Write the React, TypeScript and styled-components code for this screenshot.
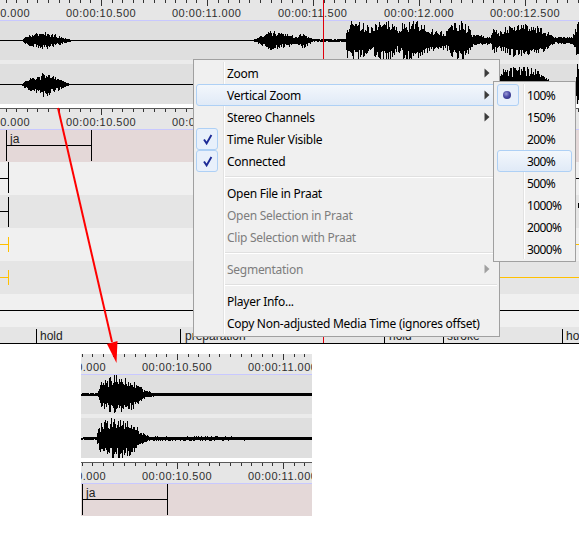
import React from "react";
import styled, { createGlobalStyle } from "styled-components";

const Global = createGlobalStyle`
  html, body { margin: 0; padding: 0; background: #fff; }
  #root { width: 579px; height: 550px; overflow: hidden; }
`;

const Page = styled.div`
  position: relative;
  width: 579px;
  height: 550px;
  background: #fff;
  overflow: hidden;
`;

const Panel = styled.div`
  position: relative;
  width: 579px;
  height: 344px;
  overflow: hidden;
  display: flex;
  flex-direction: column;
`;

const InsetPanel = styled.div`
  width: 231px;
  margin: 10px 0 0 81px;
  overflow: hidden;
  display: flex;
  flex-direction: column;
`;

const RulerBar = styled.div<{ $lined?: boolean }>`
  position: relative;
  flex: none;
  height: 20px;
  background: #e6e6e6;
  border-top: ${(p) => (p.$lined ? "1px solid #5a5a5a" : "0")};
  border-bottom: 1px solid #c8c8ff;
  overflow: hidden;
`;

const RulerTicks = styled.svg`
  display: block;
`;

const RulerLabel = styled.span<{ $x: number }>`
  position: absolute;
  top: 7px;
  left: ${(p) => p.$x}px;
  font: 11px/12px "Liberation Sans", Arial, sans-serif;
  letter-spacing: 0.5px;
  color: #2e2e2e;
  white-space: nowrap;
`;

const WaveLane = styled.div<{ $h: number }>`
  flex: none;
  height: ${(p) => p.$h}px;
  background: #dfdfdf;
  overflow: hidden;
`;

const WaveSvg = styled.svg`
  display: block;
`;

const LaneGap = styled.div<{ $white?: boolean }>`
  flex: none;
  height: 4px;
  background: ${(p) => (p.$white ? "#fff" : "#ebebeb")};
`;

const PinkTier = styled.div`
  position: relative;
  flex: none;
  height: 32px;
  background: #e4d8d8;
`;

const Segment = styled.div<{ $x: number; $w: number }>`
  position: absolute;
  top: 0;
  bottom: 1px;
  left: ${(p) => p.$x}px;
  width: ${(p) => p.$w}px;
  box-sizing: border-box;
  border-left: 1px solid #000;
  border-right: 1px solid #000;
  &::after {
    content: "";
    position: absolute;
    top: 15px;
    left: 0;
    right: 0;
    height: 1px;
    background: #000;
  }
`;

const SegmentLabel = styled.span`
  position: absolute;
  top: 2px;
  left: 3px;
  font: 12px/14px "Liberation Sans", Arial, sans-serif;
  color: #222;
`;

const TierRow = styled.div<{ $shade?: boolean; $h?: number }>`
  position: relative;
  flex: none;
  height: ${(p) => p.$h ?? 33}px;
  background: ${(p) => (p.$shade ? "#e5e5e5" : "#f0f0f0")};
`;

const VMark = styled.div<{ $x: number; $top: number; $h: number; $c?: string }>`
  position: absolute;
  left: ${(p) => p.$x}px;
  top: ${(p) => p.$top}px;
  width: 1px;
  height: ${(p) => p.$h}px;
  background: ${(p) => p.$c ?? "#000"};
`;

const HMark = styled.div<{ $x: number; $w: number; $top: number; $c?: string }>`
  position: absolute;
  left: ${(p) => p.$x}px;
  top: ${(p) => p.$top}px;
  width: ${(p) => p.$w}px;
  height: 1px;
  background: ${(p) => p.$c ?? "#000"};
`;

const TierText = styled.span<{ $x: number }>`
  position: absolute;
  left: ${(p) => p.$x}px;
  top: 2px;
  font: 12px/14px "Liberation Sans", Arial, sans-serif;
  color: #222;
  white-space: nowrap;
`;

const PanelEnd = styled.div`
  flex: none;
  height: 1px;
  background: #000;
`;

const Crosshair = styled.div`
  position: absolute;
  left: 323px;
  top: 0;
  width: 1px;
  height: 343px;
  background: #e0000c;
`;

const ArrowLayer = styled.svg`
  position: absolute;
  left: 0;
  top: 0;
  pointer-events: none;
`;

const Menu = styled.div`
  position: absolute;
  left: 193px;
  top: 59px;
  width: 307px;
  box-sizing: border-box;
  padding: 2px;
  background: #f0f0f0;
  border: 1px solid #a0a0a0;
  font: 12px/22px "Noto Sans", sans-serif;
  color: #000;
`;

const SubMenu = styled(Menu)`
  left: 299px;
  top: 21px;
  width: 83px;
  padding: 2px 3px 1px;
`;

const IconRail = styled.div`
  position: absolute;
  left: 29px;
  top: 2px;
  bottom: 2px;
  width: 1px;
  background: #e2e2e2;
  border-right: 1px solid #fff;
`;

const Item = styled.div<{ $active?: boolean; $disabled?: boolean }>`
  position: relative;
  display: flex;
  align-items: center;
  box-sizing: border-box;
  height: 22px;
  color: ${(p) => (p.$disabled ? "#7d7d7d" : "#000")};
  border: 1px solid ${(p) => (p.$active ? "#aed0f5" : "transparent")};
  border-radius: 3px;
  background: ${(p) => (p.$active ? "linear-gradient(#f3f7fc, #e0eaf7)" : "transparent")};
`;

const IconSlot = styled.div<{ $on?: boolean }>`
  flex: none;
  box-sizing: border-box;
  display: flex;
  align-items: center;
  justify-content: center;
  width: 22px;
  height: 22px;
  margin: -1px 0 -1px -1px;
  border-radius: 3px;
  border: 1px solid ${(p) => (p.$on ? "#aed0f5" : "transparent")};
  background: ${(p) => (p.$on ? "#e8f0fb" : "transparent")};
`;

const ItemText = styled.span`
  margin-left: 9px;
  padding-top: 1px;
  white-space: nowrap;
  letter-spacing: -0.27px;
`;

const PercentText = styled(ItemText)`
  margin-left: 8px;
  letter-spacing: -0.6px;
`;

const SubArrow = styled.svg`
  position: absolute;
  right: 6px;
  top: 5px;
`;

const MenuSeparator = styled.div`
  height: 1px;
  margin: 4px 0 4px 29px;
  background: #e0e0e0;
  border-bottom: 1px solid #fff;
  box-sizing: content-box;
`;

const RadioBall = styled.div`
  width: 8px;
  height: 8px;
  margin: -1px 0 0 -2px;
  border-radius: 50%;
  background: radial-gradient(circle at 40% 35%, #9a9ad8 0%, #4a4aa6 45%, #222270 100%);
`;

type Env = [number, number][];

function makeWave(width: number, center: number, env: Env, seed: number) {
  let s = seed;
  const rnd = () => {
    s = (s * 16807) % 2147483647;
    return s / 2147483647;
  };
  let d = "";
  let seg = 0;
  for (let x = 0; x < width; x++) {
    while (seg < env.length - 2 && x > env[seg + 1][0]) seg++;
    const [x0, a0] = env[seg];
    const [x1, a1] = env[seg + 1];
    const amp = a0 + ((a1 - a0) * Math.min(1, Math.max(0, (x - x0) / (x1 - x0 || 1))));
    const top = Math.round(amp * (0.42 + 0.58 * rnd()));
    const bottom = Math.round(amp * (0.42 + 0.58 * rnd()));
    d += `M${x + 0.5} ${center - top}V${center + bottom + 1}`;
  }
  return d;
}

const Wave = ({ width, height, center, env, seed }: { width: number; height: number; center: number; env: Env; seed: number }) => (
  <WaveLane $h={height}>
    <WaveSvg width={width} height={height} shapeRendering="crispEdges">
      <path d={makeWave(width, center, env, seed)} stroke="#000" strokeWidth={1} fill="none" />
    </WaveSvg>
  </WaveLane>
);

const Ruler = ({ width, phase, lined, labels }: { width: number; phase: number; lined?: boolean; labels: string[] }) => {
  let d = "";
  for (let i = -10; i * 10.6 + phase < width; i++) {
    const x = Math.round(i * 10.6 + phase) + 0.5;
    d += `M${x} 0V${i % 10 === 0 ? 6 : 3}`;
  }
  return (
    <RulerBar $lined={lined}>
      <RulerTicks width={width} height={8} shapeRendering="crispEdges">
        <path d={d} stroke="#333" strokeWidth={1} fill="none" />
      </RulerTicks>
      {labels.map((t, i) => (
        <RulerLabel key={t} $x={phase + (i - 1) * 106 - 35}>
          {t}
        </RulerLabel>
      ))}
    </RulerBar>
  );
};

const topEnvA: Env = [[0,0],[22,0],[24,3],[30,6],[45,9],[55,6],[62,3],[68,1.5],[72,0],[252,0],[258,3],[270,10],[280,8],[290,6],[295,3],[303,8],[310,3],[313,1],[345,1],[347,19],[355,20],[365,18],[370,12],[378,19],[392,20],[397,11],[403,19],[415,20],[425,15],[435,11],[445,8],[450,16],[460,21],[467,17],[473,6],[490,4],[494,15],[498,9],[505,14],[520,18],[535,16],[545,10],[555,3],[572,3],[577,18],[579,19]];
const topEnvB: Env = [[0,0],[21,0],[24,3],[30,6],[40,9],[44,13],[52,8],[60,5],[66,2],[70,0],[495,0],[497,14],[500,16],[525,19],[540,13],[550,3],[575,2],[577,21],[579,21]];
const insetEnvA: Env = [[0,1],[16,1],[20,12],[28,18],[42,20],[50,16],[60,7],[66,3],[75,1.5],[231,1.2]];
const insetEnvB: Env = [[0,1],[15,1],[18,13],[25,20],[40,22],[52,17],[60,6],[68,2],[231,1.2]];

const rulerTop = ["00:00:10.000", "00:00:10.500", "00:00:11.000", "00:00:11.500", "00:00:12.000", "00:00:12.500"];
const rulerSecond = ["00:00:10.000", "00:00:10.500", "00:00:11.000"];
const rulerInset = ["00:00:10.000", "00:00:10.500", "00:00:11.000"];

const Arrow = () => (
  <SubArrow width={6} height={10} viewBox="0 0 6 10">
    <path d="M0.5 0.5L5.5 5L0.5 9.5Z" fill="#3c3c3c" />
  </SubArrow>
);

const GreyArrow = () => (
  <SubArrow width={6} height={10} viewBox="0 0 6 10">
    <path d="M0.5 0.5L5.5 5L0.5 9.5Z" fill="#a0a0a0" />
  </SubArrow>
);

const Check = () => (
  <svg width={11} height={11} viewBox="0 0 11 11">
    <path d="M2 5.5L4.6 9.4L9.4 1" fill="none" stroke="#1c2a96" strokeWidth={1.9} />
  </svg>
);

const ZoomSubMenu = () => (
  <SubMenu>
    <IconRail />
    <Item>
      <IconSlot $on><RadioBall /></IconSlot>
      <PercentText>100%</PercentText>
    </Item>
    <Item><IconSlot /><PercentText>150%</PercentText></Item>
    <Item><IconSlot /><PercentText>200%</PercentText></Item>
    <Item $active><IconSlot /><PercentText>300%</PercentText></Item>
    <Item><IconSlot /><PercentText>500%</PercentText></Item>
    <Item><IconSlot /><PercentText>1000%</PercentText></Item>
    <Item><IconSlot /><PercentText>2000%</PercentText></Item>
    <Item><IconSlot /><PercentText>3000%</PercentText></Item>
  </SubMenu>
);

export default function App() {
  return (
    <Page>
      <Global />
      <Panel>
        <Ruler width={579} phase={101} labels={rulerTop} />
        <Wave width={579} height={39} center={19} env={topEnvA} seed={1234} />
        <LaneGap />
        <Wave width={579} height={40} center={20} env={topEnvB} seed={987} />
        <LaneGap $white />
        <Ruler width={579} phase={101} lined labels={rulerSecond} />
        <PinkTier>
          <Segment $x={6} $w={86}>
            <SegmentLabel>ja</SegmentLabel>
          </Segment>
        </PinkTier>
        <TierRow>
          <VMark $x={8} $top={0} $h={31} />
          <HMark $x={0} $w={8} $top={16} />
          <HMark $x={400} $w={179} $top={16} />
        </TierRow>
        <TierRow $shade>
          <VMark $x={8} $top={2} $h={30} />
          <HMark $x={0} $w={8} $top={16} />
          <VMark $x={578} $top={8} $h={5} />
        </TierRow>
        <TierRow>
          <VMark $x={8} $top={9} $h={15} $c="#ffc000" />
          <HMark $x={0} $w={8} $top={16} $c="#ffc000" />
          <HMark $x={400} $w={179} $top={16} $c="#ffc000" />
        </TierRow>
        <TierRow $shade>
          <VMark $x={8} $top={9} $h={15} $c="#ffc000" />
          <HMark $x={0} $w={8} $top={16} $c="#ffc000" />
          <HMark $x={400} $w={179} $top={16} $c="#ffc000" />
        </TierRow>
        <TierRow>
          <HMark $x={0} $w={579} $top={16} />
        </TierRow>
        <TierRow $shade $h={16}>
          <VMark $x={36} $top={2} $h={14} />
          <TierText $x={40}>hold</TierText>
          <VMark $x={180} $top={2} $h={14} />
          <TierText $x={185}>preparation</TierText>
          <VMark $x={384} $top={2} $h={14} />
          <TierText $x={389}>hold</TierText>
          <VMark $x={443} $top={2} $h={14} />
          <TierText $x={447}>stroke</TierText>
          <VMark $x={562} $top={2} $h={14} />
          <TierText $x={566}>hold</TierText>
        </TierRow>
        <PanelEnd />
        <Crosshair />
      </Panel>

      <InsetPanel>
        <Ruler width={231} phase={96} labels={rulerInset} />
        <Wave width={231} height={39} center={19} env={insetEnvA} seed={4242} />
        <LaneGap />
        <Wave width={231} height={40} center={20} env={insetEnvB} seed={777} />
        <LaneGap $white />
        <Ruler width={231} phase={96} lined labels={rulerInset} />
        <PinkTier>
          <Segment $x={1} $w={86}>
            <SegmentLabel>ja</SegmentLabel>
          </Segment>
        </PinkTier>
      </InsetPanel>

      <ArrowLayer width={579} height={550}>
        <path d="M58 108L112 342" stroke="#ff0000" strokeWidth={2} fill="none" />
        <path d="M107 344L117.5 341L116.5 363Z" fill="#ff0000" />
      </ArrowLayer>

      <Menu>
        <IconRail />
        <Item><IconSlot /><ItemText>Zoom</ItemText><Arrow /></Item>
        <Item $active><IconSlot /><ItemText>Vertical Zoom</ItemText><Arrow /></Item>
        <Item><IconSlot /><ItemText>Stereo Channels</ItemText><Arrow /></Item>
        <Item><IconSlot $on><Check /></IconSlot><ItemText>Time Ruler Visible</ItemText></Item>
        <Item><IconSlot $on><Check /></IconSlot><ItemText>Connected</ItemText></Item>
        <MenuSeparator />
        <Item><IconSlot /><ItemText>Open File in Praat</ItemText></Item>
        <Item $disabled><IconSlot /><ItemText>Open Selection in Praat</ItemText></Item>
        <Item $disabled><IconSlot /><ItemText>Clip Selection with Praat</ItemText></Item>
        <MenuSeparator />
        <Item $disabled><IconSlot /><ItemText>Segmentation</ItemText><GreyArrow /></Item>
        <MenuSeparator />
        <Item><IconSlot /><ItemText>Player Info...</ItemText></Item>
        <Item><IconSlot /><ItemText>Copy Non-adjusted Media Time (ignores offset)</ItemText></Item>
        <ZoomSubMenu />
      </Menu>
    </Page>
  );
}
